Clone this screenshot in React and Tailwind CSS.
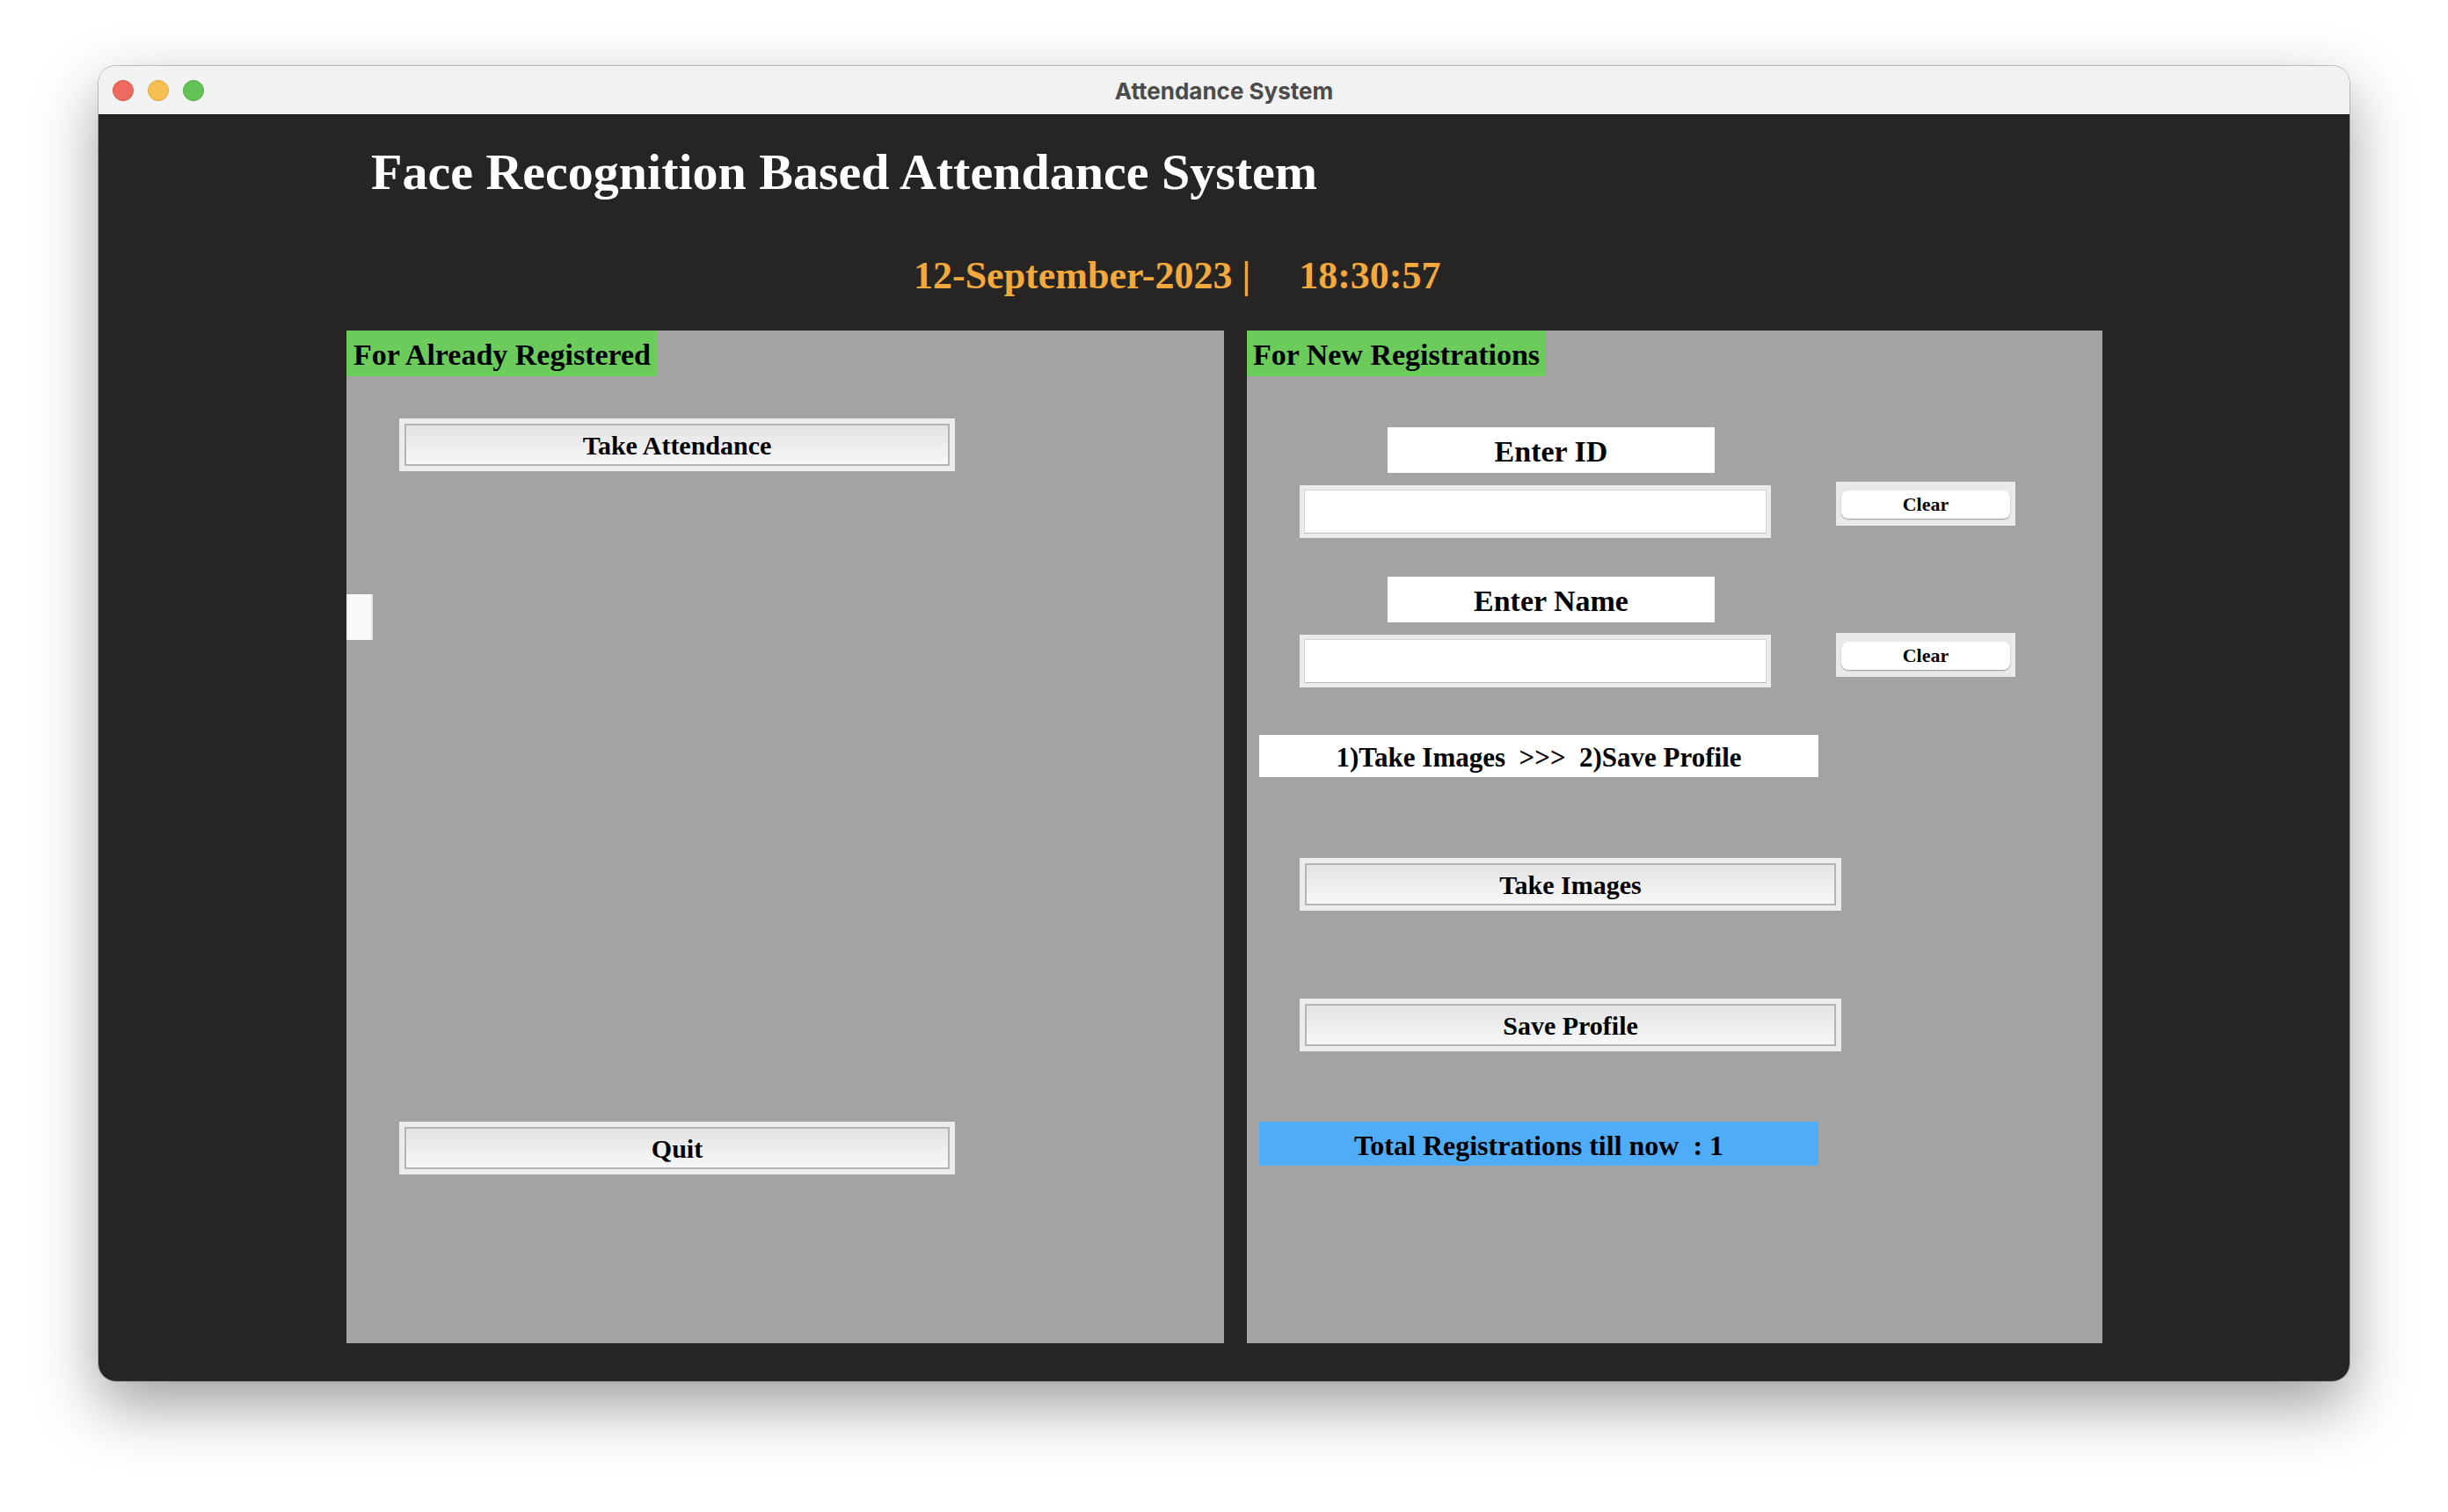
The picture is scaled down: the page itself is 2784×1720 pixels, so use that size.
// Attendance System window (tkinter look) rebuilt with Tailwind

const serif = "font-['Liberation_Serif','Times_New_Roman',serif] font-bold";

// ─── Tk-style push button ─────────────────────────────────────────────────────
function TkButton({ label, width }) {
  return (
    <div className={`${width} h-[60px] bg-[#ececec] p-[6px]`}>
      <div
        className={`h-full border-2 border-[#b4b4b4] bg-gradient-to-b from-[#e4e4e4] to-[#f7f7f7]
                    flex items-center justify-center pt-[2px] text-[30px] leading-none text-black ${serif}`}
      >
        {label}
      </div>
    </div>
  );
}

// ─── Entry field ──────────────────────────────────────────────────────────────
function TkEntry({ className = "" }) {
  return (
    <div className={`w-[536px] h-[60px] bg-[#ebebeb] p-[5px] ${className}`}>
      <div className="h-full bg-white border border-[#d6d6d6] border-b-[#b9b9b9]" />
    </div>
  );
}

// ─── Small "Clear" button ─────────────────────────────────────────────────────
function ClearButton() {
  return (
    <div className="w-[204px] h-[50px] bg-[#e9e9e9] pl-[6px] pr-[6px] pt-[10px]">
      <div
        className={`h-[32px] bg-white rounded-[8px] shadow-[0_1px_1.5px_rgba(0,0,0,0.35)]
                    flex items-center justify-center text-[22px] leading-none text-black ${serif}`}
      >
        Clear
      </div>
    </div>
  );
}

// ─── White label box ──────────────────────────────────────────────────────────
function WhiteLabel({ children, className = "" }) {
  return (
    <div
      className={`w-[372px] h-[52px] bg-white flex items-center justify-center pt-[4px]
                  text-[34px] leading-none text-black ${serif} ${className}`}
    >
      {children}
    </div>
  );
}

function GreenHead({ children, width }) {
  return (
    <div
      className={`${width} h-[52px] bg-[#6bcb5b] flex items-center justify-center pt-[3px]
                  text-[34px] leading-none text-black whitespace-nowrap ${serif}`}
    >
      {children}
    </div>
  );
}

export default function App() {
  return (
    <div className="w-[2784px] h-[1720px] bg-white pl-[112px] pt-[75px] overflow-hidden">
      {/* Window */}
      <div className="w-[2560px] rounded-[20px] overflow-hidden shadow-[0_0_0_1px_rgba(0,0,0,0.22),0_28px_70px_rgba(0,0,0,0.38)]">
        {/* Title bar */}
        <div className="h-[56px] bg-[#f2f2f2] border-b border-[#111] grid grid-cols-[1fr_auto_1fr] items-center">
          <div className="flex items-center gap-[16px] pl-[16px]">
            <span className="w-[24px] h-[24px] rounded-full bg-[#ee6a5f] border border-[#d9564b]" />
            <span className="w-[24px] h-[24px] rounded-full bg-[#f6bf4f] border border-[#dca53c]" />
            <span className="w-[24px] h-[24px] rounded-full bg-[#61c454] border border-[#4fae44]" />
          </div>
          <div className="font-['Inter','Roboto',sans-serif] font-bold text-[26px] text-[#4b4b4b] pt-[1px]">
            Attendance System
          </div>
          <div />
        </div>

        {/* Content */}
        <div className="h-[1440px] bg-[#262523]">
          <div className={`pl-[310px] pt-[36px] text-[58px] leading-[58px] text-white whitespace-nowrap ${serif}`}>
            Face Recognition Based Attendance System
          </div>

          <div className={`mt-[67px] pl-[927px] flex text-[44px] leading-[44px] text-[#f4a93c] whitespace-nowrap ${serif}`}>
            <span>12-September-2023 |</span>
            <span className="ml-[55px]">18:30:57</span>
          </div>

          <div className="mt-[40px] pl-[282px] flex gap-[26px]">
            {/* Left panel */}
            <div className="w-[998px] h-[1152px] bg-[#a3a3a3] flex flex-col items-start">
              <GreenHead width="w-[354px]">For Already Registered</GreenHead>
              <div className="mt-[48px] ml-[60px]">
                <TkButton label="Take Attendance" width="w-[632px]" />
              </div>
              <div className="mt-[140px] w-[30px] h-[52px] bg-[#fafafa] border-l-2 border-l-[#efefef] border-r-2 border-r-[#e6e6e6]" />
              <div className="mt-[548px] ml-[60px]">
                <TkButton label="Quit" width="w-[632px]" />
              </div>
            </div>

            {/* Right panel */}
            <div className="w-[973px] h-[1152px] bg-[#a3a3a3] flex flex-col items-start">
              <GreenHead width="w-[340px]">For New Registrations</GreenHead>

              <WhiteLabel className="mt-[58px] ml-[160px]">Enter ID</WhiteLabel>
              <div className="mt-[10px] flex items-start">
                <TkEntry className="ml-[60px] mt-[4px]" />
                <div className="ml-[74px]">
                  <ClearButton />
                </div>
              </div>

              <WhiteLabel className="mt-[44px] ml-[160px]">Enter Name</WhiteLabel>
              <div className="mt-[12px] flex items-start">
                <TkEntry className="ml-[60px] mt-[2px]" />
                <div className="ml-[74px]">
                  <ClearButton />
                </div>
              </div>

              <div
                className={`mt-[54px] ml-[14px] w-[636px] h-[48px] bg-white flex items-center justify-center pt-[3px]
                            text-[31px] leading-none text-black whitespace-pre ${serif}`}
              >
                {"1)Take Images  >>>  2)Save Profile"}
              </div>

              <div className="mt-[92px] ml-[60px]">
                <TkButton label="Take Images" width="w-[616px]" />
              </div>
              <div className="mt-[100px] ml-[60px]">
                <TkButton label="Save Profile" width="w-[616px]" />
              </div>

              <div
                className={`mt-[80px] ml-[14px] w-[636px] h-[50px] bg-[#4fadf7] flex items-center justify-center pt-[3px]
                            text-[32px] leading-none text-black whitespace-pre ${serif}`}
              >
                {"Total Registrations till now  : 1"}
              </div>
            </div>
          </div>
        </div>
      </div>
    </div>
  );
}
